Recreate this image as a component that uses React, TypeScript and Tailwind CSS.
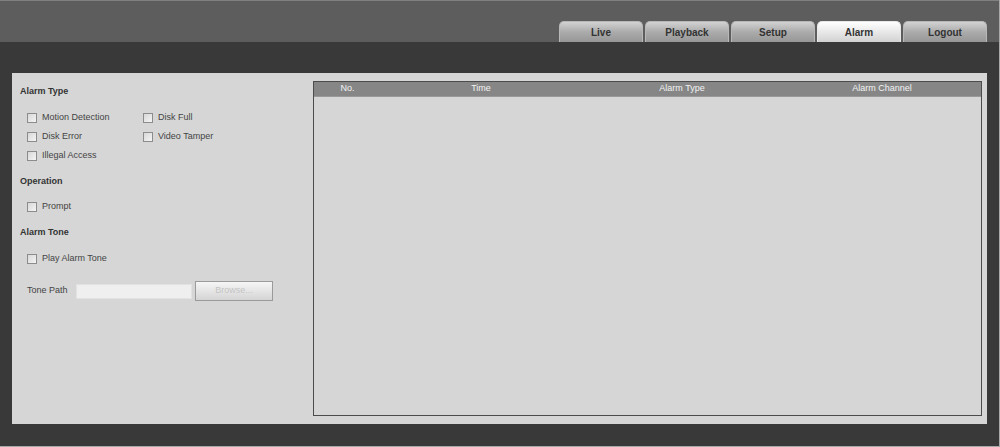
import React from "react";

const tabs = ["Live", "Playback", "Setup", "Alarm", "Logout"];

function Box() {
  return (
    <span className="inline-block w-[10px] h-[10px] border border-[#8c8c8c] bg-gradient-to-br from-[#d8d8d8] to-[#f4f4f4] shrink-0" />
  );
}

function Check({ label, w }: { label: string; w?: string }) {
  return (
    <div className={`flex items-center gap-[5px] ${w ?? ""}`}>
      <Box />
      <span className="text-[9px] text-[#444]">{label}</span>
    </div>
  );
}

function Heading({ children, mt }: { children: React.ReactNode; mt: string }) {
  return (
    <div className={`${mt} h-[14px] leading-[14px] pl-[8px] text-[9px] font-bold text-[#333]`}>
      {children}
    </div>
  );
}

export default function App() {
  return (
    <div
      className="w-[1000px] h-[447px] bg-[#393939] flex flex-col border-r border-b border-[#a8a8a8] overflow-hidden"
      style={{ fontFamily: '"Liberation Sans", Arial, sans-serif' }}
    >
      {/* top bar with navigation tabs */}
      <div className="h-[42px] shrink-0 bg-[#5d5d5d] border-t border-[#808080] flex items-end justify-end pr-[12px]">
        <div className="flex gap-[2px]">
          {tabs.map((t) => (
            <div
              key={t}
              className={`w-[84px] h-[21px] rounded-t-[5px] flex items-center justify-center text-[10px] font-bold text-[#333] border-t border-x ${
                t === "Alarm"
                  ? "bg-gradient-to-b from-[#ffffff] to-[#d2d2d2] border-[#e8e8e8]"
                  : "bg-gradient-to-b from-[#d2d2d2] via-[#ababab] to-[#979797] border-[#b8b8b8]"
              }`}
            >
              {t}
            </div>
          ))}
        </div>
      </div>

      {/* content area */}
      <div className="flex-1 pl-[12px] pr-[12px] pt-[31px] pb-[22px] flex">
        <div className="flex-1 bg-[#d6d6d6] flex">
          {/* settings column */}
          <div className="w-[301px] shrink-0 flex flex-col pt-[11px]">
            <Heading mt="mt-0">Alarm Type</Heading>
            <div className="mt-[10px] pl-[15px] flex flex-col">
              <div className="h-[19px] flex items-center">
                <Check label="Motion Detection" w="w-[116px]" />
                <Check label="Disk Full" />
              </div>
              <div className="h-[19px] flex items-center">
                <Check label="Disk Error" w="w-[116px]" />
                <Check label="Video Tamper" />
              </div>
              <div className="h-[19px] flex items-center">
                <Check label="Illegal Access" />
              </div>
            </div>
            <Heading mt="mt-[9px]">Operation</Heading>
            <div className="mt-[9px] pl-[15px] h-[19px] flex items-center">
              <Check label="Prompt" />
            </div>
            <Heading mt="mt-[9px]">Alarm Tone</Heading>
            <div className="mt-[10px] pl-[15px] h-[19px] flex items-center">
              <Check label="Play Alarm Tone" />
            </div>
            <div className="mt-[13px] pl-[15px] h-[20px] flex items-center">
              <span className="w-[49px] text-[9px] text-[#444]">Tone Path</span>
              <div className="w-[116px] h-[15px] bg-[#efefef] border border-[#e2e2e2]" />
              <div className="ml-[3px] w-[78px] h-[20px] border border-[#9a9a9a] bg-gradient-to-b from-[#f6f6f6] to-[#d4d4d4] flex items-center justify-center text-[9px] text-[#c4c4c4]">
                Browse...
              </div>
            </div>
          </div>

          {/* alarm log table */}
          <div className="flex-1 mt-[8px] mb-[8px] mr-[5px] border border-[#4c4c4c] flex flex-col bg-[#d6d6d6]">
            <div className="h-[15px] bg-[#868686] border-b border-[#9a9a9a] flex items-center text-[9px] text-[#f2f2f2]">
              <div className="w-[67px] text-center">No.</div>
              <div className="w-[200px] text-center">Time</div>
              <div className="w-[202px] text-center">Alarm Type</div>
              <div className="flex-1 text-center">Alarm Channel</div>
            </div>
            <div className="flex-1" />
          </div>
        </div>
      </div>
    </div>
  );
}
